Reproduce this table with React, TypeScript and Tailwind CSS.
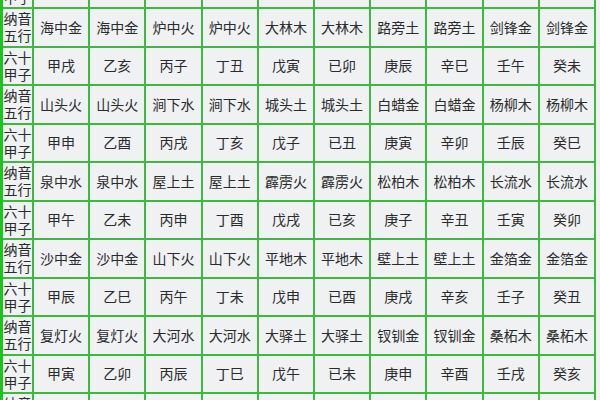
const rows: { label: [string, string]; cells: string[] }[] = [
  { label: ["六十", "甲子"], cells: ["甲子", "乙丑", "丙寅", "丁卯", "戊辰", "已巳", "庚午", "辛未", "壬申", "癸酉"] },
  { label: ["纳音", "五行"], cells: ["海中金", "海中金", "炉中火", "炉中火", "大林木", "大林木", "路旁土", "路旁土", "剑锋金", "剑锋金"] },
  { label: ["六十", "甲子"], cells: ["甲戌", "乙亥", "丙子", "丁丑", "戊寅", "已卯", "庚辰", "辛巳", "壬午", "癸未"] },
  { label: ["纳音", "五行"], cells: ["山头火", "山头火", "涧下水", "涧下水", "城头土", "城头土", "白蜡金", "白蜡金", "杨柳木", "杨柳木"] },
  { label: ["六十", "甲子"], cells: ["甲申", "乙酉", "丙戌", "丁亥", "戊子", "已丑", "庚寅", "辛卯", "壬辰", "癸巳"] },
  { label: ["纳音", "五行"], cells: ["泉中水", "泉中水", "屋上土", "屋上土", "霹雳火", "霹雳火", "松柏木", "松柏木", "长流水", "长流水"] },
  { label: ["六十", "甲子"], cells: ["甲午", "乙未", "丙申", "丁酉", "戊戌", "已亥", "庚子", "辛丑", "壬寅", "癸卯"] },
  { label: ["纳音", "五行"], cells: ["沙中金", "沙中金", "山下火", "山下火", "平地木", "平地木", "壁上土", "壁上土", "金箔金", "金箔金"] },
  { label: ["六十", "甲子"], cells: ["甲辰", "乙巳", "丙午", "丁未", "戊申", "已酉", "庚戌", "辛亥", "壬子", "癸丑"] },
  { label: ["纳音", "五行"], cells: ["复灯火", "复灯火", "大河水", "大河水", "大驿土", "大驿土", "钗钏金", "钗钏金", "桑柘木", "桑柘木"] },
  { label: ["六十", "甲子"], cells: ["甲寅", "乙卯", "丙辰", "丁巳", "戊午", "已未", "庚申", "辛酉", "壬戌", "癸亥"] },
  { label: ["纳音", "五行"], cells: ["大溪水", "大溪水", "沙中土", "沙中土", "天上火", "天上火", "石榴木", "石榴木", "大海水", "大海水"] },
];

export default function App() {
  return (
    <div
      className="w-[600px] h-[400px] overflow-hidden bg-[#eff1f3] text-[#2b2b2b]"
      style={{ fontFamily: '"Noto Sans CJK SC", "Noto Sans", sans-serif' }}
    >
      {/* bright strip on the left edge, then the grid whose gaps are the borders */}
      <div className="mt-[-29.5px] w-[596px] border-l-[3px] border-[#1ec41e]">
        <div className="grid grid-cols-[29px_repeat(10,minmax(0,1fr))] auto-rows-[36.5px] gap-[2px] bg-[#3dba3d] pr-[2px]">
          {rows.map((row, i) => (
            <Row key={i} label={row.label} cells={row.cells} />
          ))}
        </div>
      </div>
    </div>
  );
}

function Row({ label, cells }: { label: [string, string]; cells: string[] }) {
  return (
    <>
      <div className="bg-[#eff1f3] flex flex-col items-center justify-center text-[14px] leading-[17px] overflow-hidden">
        <span>{label[0]}</span>
        <span>{label[1]}</span>
      </div>
      {cells.map((c, j) => (
        <div key={j} className="bg-[#eff1f3] flex items-center justify-center text-[14px] whitespace-nowrap overflow-hidden">
          {c}
        </div>
      ))}
    </>
  );
}
